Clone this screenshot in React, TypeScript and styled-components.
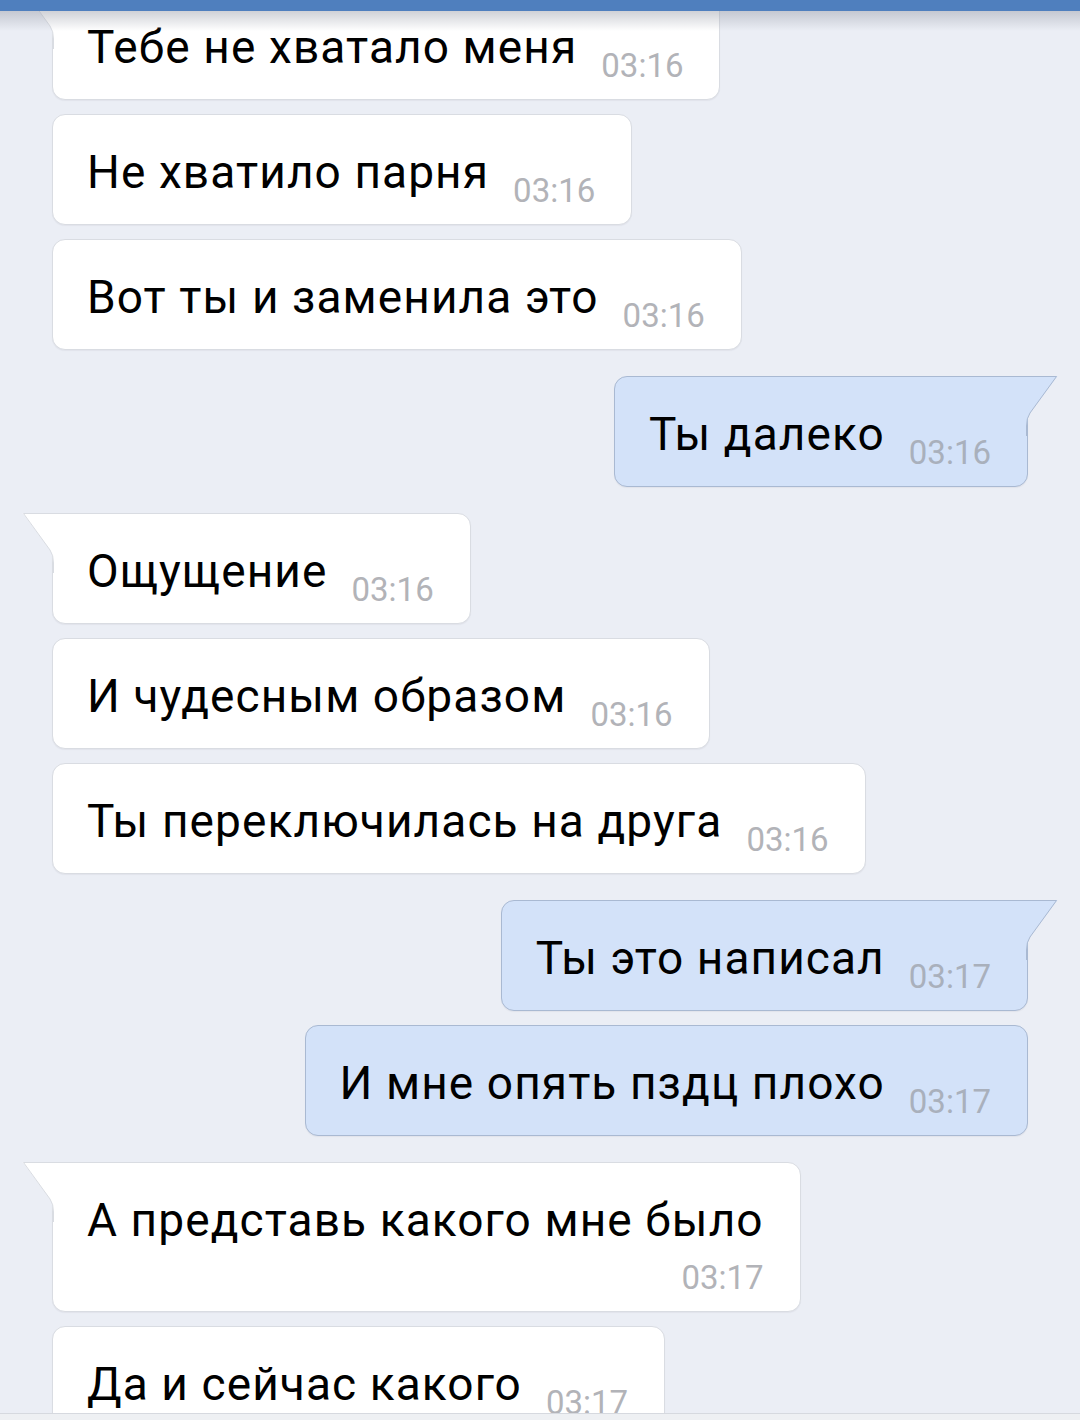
import React from "react";
import styled, { createGlobalStyle, css } from "styled-components";

const GlobalStyle = createGlobalStyle`
  html, body {
    margin: 0;
    padding: 0;
    background: #ebeef5;
  }
  body {
    font-family: Roboto, "Noto Sans", sans-serif;
  }
`;

const Screen = styled.div`
  position: relative;
  width: 1080px;
  height: 1420px;
  overflow: hidden;
  background: #ebeef5;
`;

// toolbar edge lying over the scrolled list
const TopBar = styled.div`
  position: absolute;
  top: 0;
  left: 0;
  right: 0;
  height: 11px;
  background: #4f7fbe;
  z-index: 3;

  &::after {
    content: "";
    position: absolute;
    top: 11px;
    left: 0;
    right: 0;
    height: 20px;
    background: linear-gradient(rgba(150, 154, 166, 0.45), rgba(235, 238, 245, 0));
  }
`;

const InputEdge = styled.div`
  position: absolute;
  left: 0;
  right: 0;
  bottom: 0;
  height: 6px;
  background: #eef0f3;
  border-top: 1px solid #d6d9df;
  z-index: 3;
`;

const Feed = styled.div`
  display: flex;
  flex-direction: column;
  margin-top: -11px;
  padding: 0 52px;
`;

const Row = styled.div<{ $out?: boolean; $first?: boolean }>`
  display: flex;
  justify-content: ${p => (p.$out ? "flex-end" : "flex-start")};
  margin-top: ${p => (p.$first ? 26 : 14)}px;

  &:first-child {
    margin-top: 0;
  }
`;

const Bubble = styled.div<{ $out?: boolean; $tail?: boolean; $stacked?: boolean }>`
  position: relative;
  display: flex;
  flex-direction: ${p => (p.$stacked ? "column" : "row")};
  align-items: flex-end;
  column-gap: 24px;
  row-gap: 23px;
  padding: 30px 36px 25px 34px;
  border-radius: 13px;
  background: ${p => (p.$out ? "#d3e2f9" : "#ffffff")};
  border: 1px solid ${p => (p.$out ? "#a9b9d2" : "#d9dce2")};
  box-shadow: 0 1px 1px rgba(60, 70, 90, 0.06);

  ${p =>
    p.$tail &&
    (p.$out
      ? css`
          border-top-right-radius: 0;
        `
      : css`
          border-top-left-radius: 0;
        `)}
`;

const Text = styled.span`
  font-size: 46px;
  line-height: 54px;
  letter-spacing: 1.1px;
  color: #000;
  white-space: nowrap;
`;

const Time = styled.span<{ $out?: boolean }>`
  font-size: 33px;
  line-height: 16px;
  color: ${p => (p.$out ? "#a9b0bc" : "#b2b3b8")};
  white-space: nowrap;
`;

const TailSvg = styled.svg<{ $out?: boolean }>`
  position: absolute;
  top: -1px;
  width: 34px;
  height: 60px;
  overflow: visible;
  ${p =>
    p.$out
      ? css`
          right: -31px;
          transform: scaleX(-1);
        `
      : css`
          left: -31px;
        `}
`;

const Tail = ({ out }: { out?: boolean }) => {
  const fill = out ? "#d3e2f9" : "#ffffff";
  const stroke = out ? "#a9b9d2" : "#d9dce2";
  return (
    <TailSvg $out={out} viewBox="0 0 34 60">
      <path d="M34 0 H0.5 L28 37 Q31 42 31 50 V60 H34 Z" fill={fill} />
      <path
        d="M34 0.5 H1.5 L28 37 Q31.5 42 31.5 50 V60"
        fill="none"
        stroke={stroke}
        strokeWidth={1}
      />
    </TailSvg>
  );
};

interface Message {
  text: string;
  time: string;
  out?: boolean;
  first?: boolean;
  stacked?: boolean;
}

const messages: Message[] = [
  { text: "Тебе не хватало меня", time: "03:16", first: true },
  { text: "Не хватило парня", time: "03:16" },
  { text: "Вот ты и заменила это", time: "03:16" },
  { text: "Ты далеко", time: "03:16", out: true, first: true },
  { text: "Ощущение", time: "03:16", first: true },
  { text: "И чудесным образом", time: "03:16" },
  { text: "Ты переключилась на друга", time: "03:16" },
  { text: "Ты это написал", time: "03:17", out: true, first: true },
  { text: "И мне опять пздц плохо", time: "03:17", out: true },
  { text: "А представь какого мне было", time: "03:17", first: true, stacked: true },
  { text: "Да и сейчас какого", time: "03:17" }
];

const App = () => (
  <Screen>
    <GlobalStyle />
    <TopBar />
    <Feed>
      {messages.map((m, i) => (
        <Row key={i} $out={m.out} $first={m.first}>
          <Bubble $out={m.out} $tail={m.first} $stacked={m.stacked}>
            {m.first && <Tail out={m.out} />}
            <Text>{m.text}</Text>
            <Time $out={m.out}>{m.time}</Time>
          </Bubble>
        </Row>
      ))}
    </Feed>
    <InputEdge />
  </Screen>
);

export default App;
